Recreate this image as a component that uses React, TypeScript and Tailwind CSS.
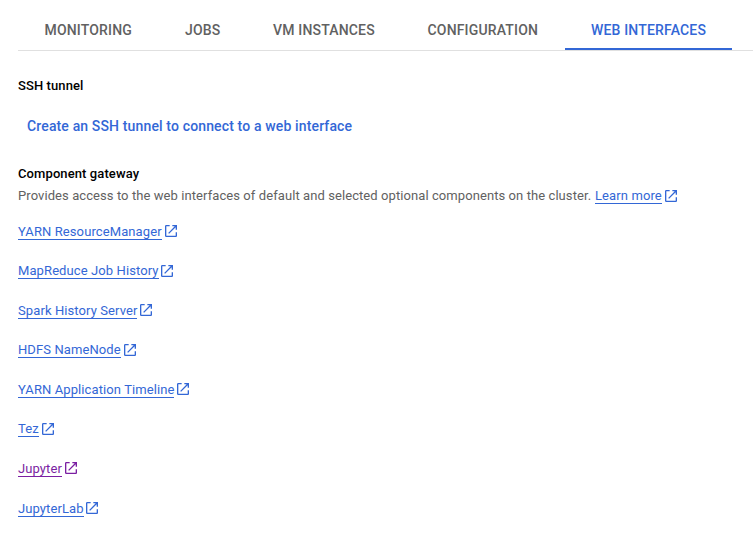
import React from "react";

const links = [
  { label: "YARN ResourceManager", width: "w-[144px]", gap: "ml-[3px]" },
  { label: "MapReduce Job History", width: "w-[141px]", gap: "ml-[2px]" },
  { label: "Spark History Server", width: "w-[119px]", gap: "ml-[3px]" },
  { label: "HDFS NameNode", width: "w-[103px]", gap: "ml-[3px]" },
  { label: "YARN Application Timeline", width: "w-[156px]", gap: "ml-[3px]" },
  { label: "Tez", width: "w-[21px]", gap: "ml-[3px]" },
  { label: "Jupyter", width: "w-[44px]", gap: "ml-[3px]", visited: true },
  { label: "JupyterLab", width: "w-[66px]", gap: "ml-[2px]" },
];

function OpenIcon({ className = "" }: { className?: string }) {
  return (
    <svg viewBox="3 3 18 18" width="12" height="12" fill="currentColor" className={`shrink-0 ${className}`}>
      <path d="M19 19H5V5h5V3H5a2 2 0 0 0-2 2v14a2 2 0 0 0 2 2h14c1.1 0 2-.9 2-2v-5h-2v5zM14 3v2h3.59l-9.83 9.83 1.41 1.41L19 6.41V10h2V3h-7z" />
    </svg>
  );
}

export default function App() {
  return (
    <div className="h-[544px] w-[753px] overflow-hidden bg-white font-[Roboto,sans-serif] text-[13px] leading-5 tracking-[0.1px] text-[#3367d6]">
      <nav className="ml-[18px] flex h-[51px] border-b border-[#e0e0e0] pt-5 text-sm font-medium tracking-[0.17px] text-[#616161]">
        <span className="ml-[26.5px] w-[140.5px]">MONITORING</span>
        <span className="w-[88px]">JOBS</span>
        <span className="w-[154.5px]">VM INSTANCES</span>
        <span className="w-[137.5px]">CONFIGURATION</span>
        <span className="h-[30px] w-[167px] border-b-2 border-[#3367d6] pl-[26px] text-[#3367d6]">WEB INTERFACES</span>
      </nav>
      <main className="pl-[18px] pt-[25px]">
        <h2 className="font-medium text-black">SSH tunnel</h2>
        <a className="ml-[9px] mt-5 block text-sm leading-5 font-medium tracking-[0.14px]">Create an SSH tunnel to connect to a web interface</a>
        <h2 className="mt-7 font-medium text-black">Component gateway</h2>
        <p className="flex items-start pt-0.5 whitespace-nowrap text-[#616161]">
          <span className="w-[577px] tracking-[0.08px]">
            Provides access to the web interfaces of default and selected optional components on the cluster.
          </span>
          <a className="mt-[2px] h-[16px] w-[67px] border-b border-current leading-[15px] text-[#3367d6]">Learn more</a>
          <OpenIcon className="mt-1 ml-[3px] text-[#3367d6]" />
        </p>
        <ul className="mt-[16.6px]">
          {links.map((l) => (
            <li key={l.label} className={`flex h-[39.57px] items-start whitespace-nowrap ${l.visited ? "text-[#7b1fa2]" : ""}`}>
              <a className={`border-b border-current pt-px leading-[15px] ${l.width}`}>{l.label}</a>
              <OpenIcon className={`mt-[2.4px] ${l.gap}`} />
            </li>
          ))}
        </ul>
      </main>
    </div>
  );
}
